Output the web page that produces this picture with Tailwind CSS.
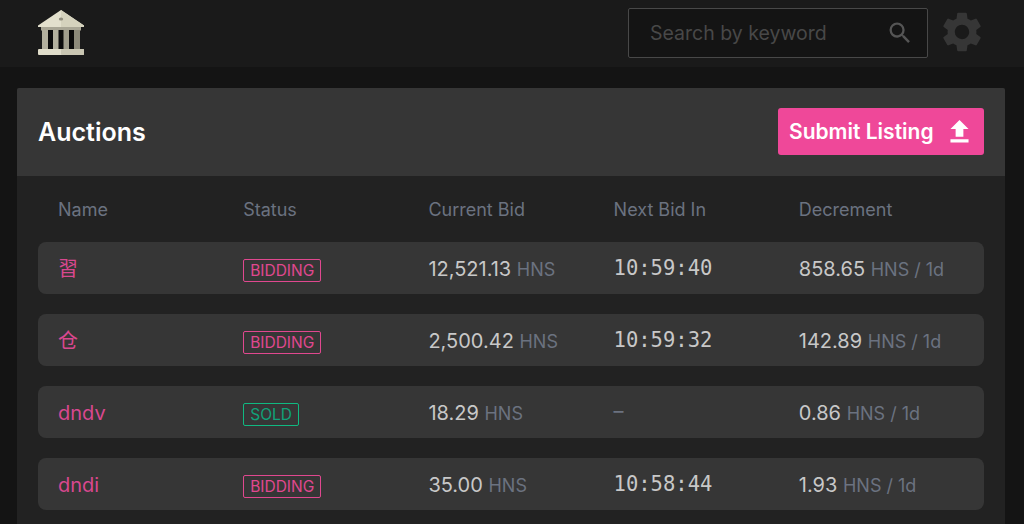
<!DOCTYPE html>
<html lang="en">
<head>
<meta charset="utf-8">
<title>Auctions</title>
<script src="https://cdn.jsdelivr.net/npm/@tailwindcss/browser@4"></script>
</head>
<body class="w-[1024px] h-[524px] overflow-hidden bg-[#141414] font-['Inter','Noto_Sans_CJK_SC',sans-serif] text-[#c8c8c8]">
<header class="h-[67px] bg-[#1a1a1a] flex items-center pb-[2px] pl-[37px] pr-[38px]">
  <svg class="w-[48px] h-[48px]" viewBox="0 0 48 48">
    <path d="M24 1 L47 16.5 V18 H1 V16.5 Z" fill="#e3e0cd"/>
    <path d="M24 1 L47 16.5 V18 H24 Z" fill="#d5d2bd"/>
    <ellipse cx="24" cy="10" rx="2.2" ry="1.5" fill="#8f8c7c"/>
    <rect x="4" y="18" width="40" height="3.5" fill="#a9a695"/>
    <rect x="6" y="21" width="36" height="19" fill="#0c0c0c"/>
    <rect x="5" y="21" width="6" height="19" fill="#b3b09e"/>
    <rect x="16" y="21" width="5.500" height="19" fill="#b3b09e"/>
    <rect x="26.500" y="21" width="5.500" height="19" fill="#a09d8c"/>
    <rect x="37" y="21" width="6" height="19" fill="#8d8a7a"/>
    <rect x="1" y="40" width="46" height="6" rx="1" fill="#e0ddca"/>
    <rect x="24" y="40" width="23" height="6" rx="1" fill="#c9c6b2"/>
  </svg>
  <div class="ml-auto w-[300px] h-[50px] border border-[#484848] rounded-[2px] bg-[#141414] flex items-center pl-[21px] pr-[13px] text-[19.500px] text-[#484848]">
    <span class="leading-none pt-[2px]">Search by keyword</span>
    <svg class="ml-auto w-[28px] h-[28px]" viewBox="0 0 24 24" fill="#555555"><path d="M15.500 14h-.79l-.28-.27A6.470 6.470 0 0 0 16 9.500 6.500 6.500 0 1 0 9.500 16c1.610 0 3.090-.59 4.230-1.570l.27.28v.79l5 4.990L20.490 19l-4.990-5zm-6 0C7.010 14 5 11.990 5 9.500S7.010 5 9.500 5 14 7.010 14 9.500 11.990 14 9.500 14z"/></svg>
  </div>
  <svg class="ml-[10px] w-[48px] h-[48px] mb-[1px]" viewBox="0 0 24 24" fill="#363636"><path d="M19.140 12.940c.04-.3.060-.61.060-.94 0-.32-.02-.64-.07-.94l2.030-1.580a.49.49 0 0 0 .12-.61l-1.920-3.320a.488.488 0 0 0-.59-.22l-2.390.96c-.5-.38-1.030-.7-1.620-.94l-.36-2.540a.484.484 0 0 0-.48-.41h-3.840c-.24 0-.43.170-.47.410l-.36 2.540c-.59.240-1.130.570-1.620.94l-2.390-.96c-.22-.08-.47 0-.59.220L2.740 8.870c-.12.210-.08.470.12.610l2.030 1.580c-.05.300-.09.630-.09.940s.02.640.07.940l-2.030 1.580a.49.49 0 0 0-.12.610l1.920 3.320c.12.220.37.290.59.220l2.390-.96c.5.380 1.030.7 1.620.94l.36 2.540c.05.240.24.410.48.410h3.840c.24 0 .44-.17.47-.41l.36-2.540c.59-.24 1.130-.56 1.620-.94l2.390.96c.22.080.47 0 .59-.22l1.920-3.320c.12-.22.070-.47-.12-.61l-2.010-1.580zM12 15.600A3.610 3.610 0 0 1 8.400 12c0-1.980 1.620-3.600 3.600-3.600s3.600 1.620 3.600 3.600-1.620 3.600-3.600 3.600z"/></svg>
</header>

<main class="ml-[17px] mt-[21px] w-[988px] h-[436px] bg-[#222222] rounded-t-[2px]">
  <div class="h-[88px] bg-[#363636] rounded-t-[2px] flex items-center justify-between px-[21px]">
    <h1 class="text-[25px] font-semibold text-white pt-[2px]">Auctions</h1>
    <button class="w-[206px] h-[47px] mb-[2px] bg-[#ef4899] rounded-[3px] flex items-center pl-[11px] text-white text-[21px] font-semibold">
      <span class="pt-[2px]">Submit Listing</span>
      <svg class="ml-auto mr-[9px] w-[31px] h-[31px]" viewBox="0 0 24 24" fill="#ffffff"><path d="M9 16h6v-6h4l-7-7-7 7h4zm-4 2h14v2.500H5z"/></svg>
    </button>
  </div>

  <div class="grid grid-cols-5 w-[946px] ml-[21px] pl-[20px] h-[66px] items-center text-[18px] text-[#6b7280]">
    <div>Name</div><div>Status</div><div>Current Bid</div><div>Next Bid In</div><div>Decrement</div>
  </div>

  <div class="ml-[21px] w-[946px] flex flex-col gap-[20px]">
    <div class="grid grid-cols-5 items-center h-[52px] pl-[20px] bg-[#363636] rounded-[8px] text-[20px]">
      <div class="text-[#d9488f] font-['Noto_Sans_CJK_SC',sans-serif]">習</div>
      <div class="pt-[4px]"><span class="block w-fit border border-[#e0488f] rounded-[2px] px-[6px] text-[15.500px] leading-[21px] text-[#e0488f]">BIDDING</span></div>
      <div class="pt-[2px]">12,521.13 <span class="text-[#6b7280] text-[18px]">HNS</span></div>
      <div class="font-['DejaVu_Sans_Mono',monospace] text-[20.500px]">10:59:40</div>
      <div class="pt-[2px]">858.65 <span class="text-[#6b7280] text-[18px]">HNS / 1d</span></div>
    </div>
    <div class="grid grid-cols-5 items-center h-[52px] pl-[20px] bg-[#363636] rounded-[8px] text-[20px]">
      <div class="text-[#d9488f] font-['Noto_Sans_CJK_SC',sans-serif]">仓</div>
      <div class="pt-[4px]"><span class="block w-fit border border-[#e0488f] rounded-[2px] px-[6px] text-[15.500px] leading-[21px] text-[#e0488f]">BIDDING</span></div>
      <div class="pt-[2px]">2,500.42 <span class="text-[#6b7280] text-[18px]">HNS</span></div>
      <div class="font-['DejaVu_Sans_Mono',monospace] text-[20.500px]">10:59:32</div>
      <div class="pt-[2px]">142.89 <span class="text-[#6b7280] text-[18px]">HNS / 1d</span></div>
    </div>
    <div class="grid grid-cols-5 items-center h-[52px] pl-[20px] bg-[#363636] rounded-[8px] text-[20px]">
      <div class="text-[#d9488f] pt-[2px]">dndv</div>
      <div class="pt-[4px]"><span class="block w-fit border border-[#10b981] rounded-[2px] px-[6px] text-[15.500px] leading-[21px] text-[#10a37a]">SOLD</span></div>
      <div class="pt-[2px]">18.29 <span class="text-[#6b7280] text-[18px]">HNS</span></div>
      <div class="text-[#6b7280] pb-[2px]">–</div>
      <div class="pt-[2px]">0.86 <span class="text-[#6b7280] text-[18px]">HNS / 1d</span></div>
    </div>
    <div class="grid grid-cols-5 items-center h-[52px] pl-[20px] bg-[#363636] rounded-[8px] text-[20px]">
      <div class="text-[#d9488f] pt-[2px]">dndi</div>
      <div class="pt-[4px]"><span class="block w-fit border border-[#e0488f] rounded-[2px] px-[6px] text-[15.500px] leading-[21px] text-[#e0488f]">BIDDING</span></div>
      <div class="pt-[2px]">35.00 <span class="text-[#6b7280] text-[18px]">HNS</span></div>
      <div class="font-['DejaVu_Sans_Mono',monospace] text-[20.500px]">10:58:44</div>
      <div class="pt-[2px]">1.93 <span class="text-[#6b7280] text-[18px]">HNS / 1d</span></div>
    </div>
  </div>
</main>
</body>
</html>
